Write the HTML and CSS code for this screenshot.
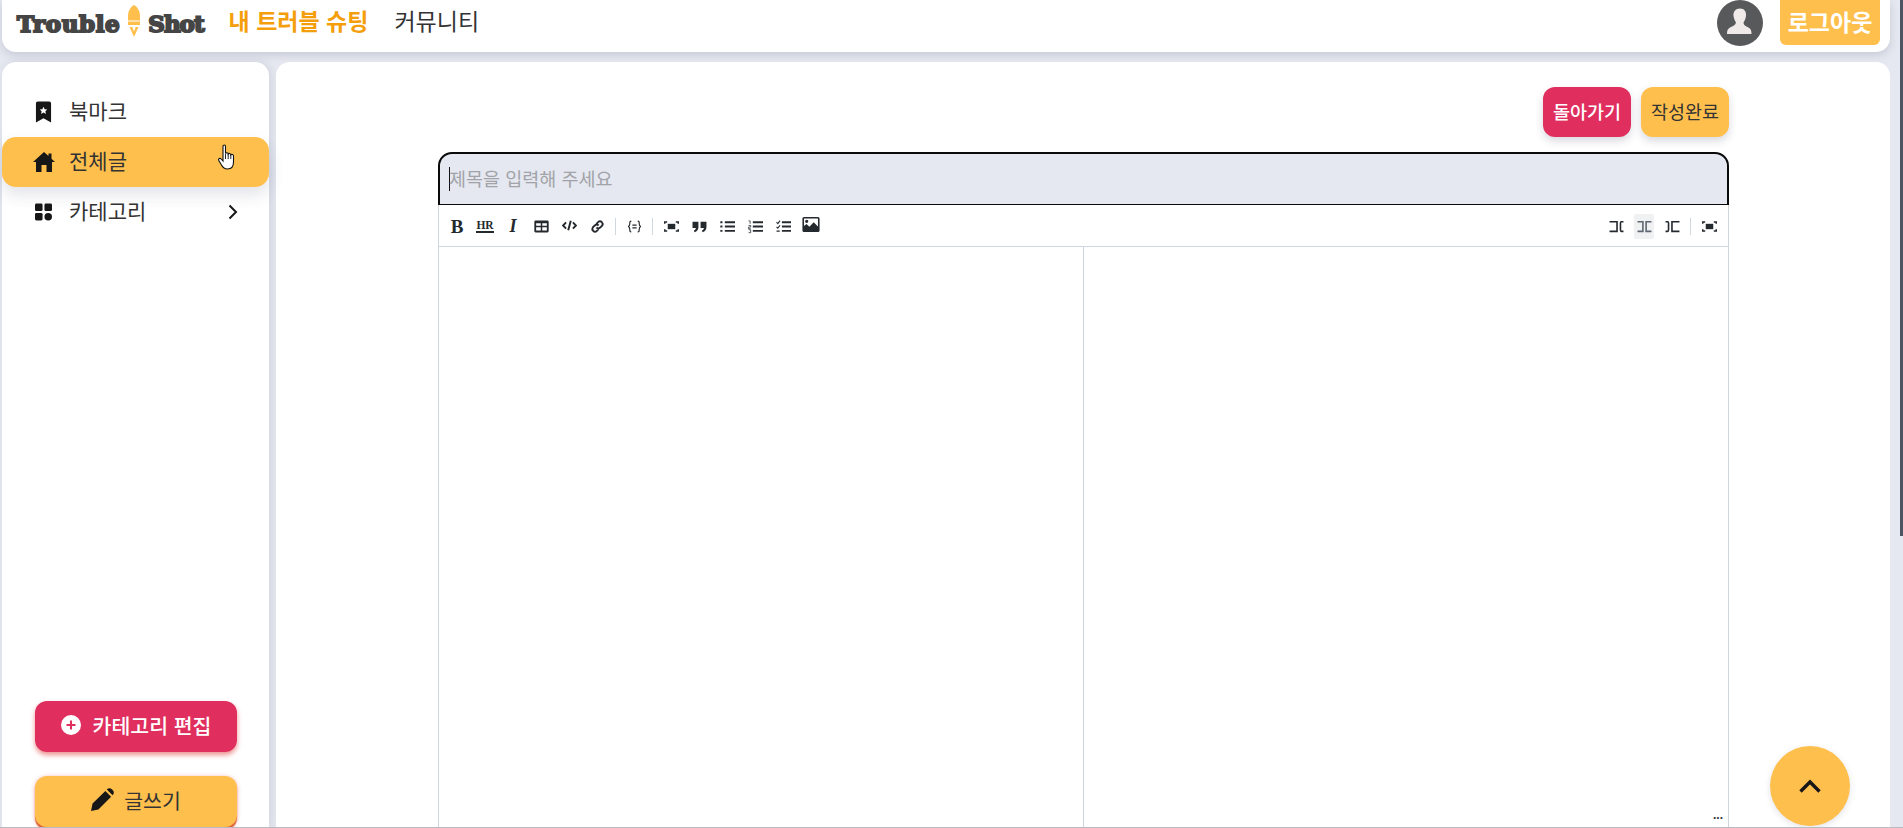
FILE: index.html
```html
<!DOCTYPE html>
<html lang="ko">
<head>
<meta charset="utf-8">
<title>Trouble Shot</title>
<link rel="stylesheet" href="styles.css">
</head>
<body>
<div class="page">
  <header class="topbar">
    <div class="brand">
      <span class="brand-word">Trouble</span>
      <svg class="rocket" viewBox="0 0 14 32"><path d="M7 0C10.500 2 13 6 13 11V20H1V11C1 6 3.500 2 7 0Z" fill="#ffbf4d"/><rect x="1" y="15.500" width="12" height="1" fill="#fff"/><path d="M2.500 22H11.500L7 32Z" fill="#ffbf4d"/><path d="M5.300 22H8.700L7 26.500Z" fill="#fff"/></svg>
      <span class="brand-word brand-tight">Shot</span>
    </div>
    <nav class="topnav">
      <a class="topnav-link is-active">내 트러블 슈팅</a>
      <a class="topnav-link">커뮤니티</a>
    </nav>
    <div class="account">
      <svg class="avatar" viewBox="0 0 46 46"><circle cx="23" cy="23" r="23" fill="#58595b"/><path d="M23 8.500C27.500 8.500 29.500 12 29 16C28.700 18.500 27.500 21 26.500 22.500C26.500 25 28.500 26 31.500 27.500C34 28.800 34.500 31 34.500 34H10C10 31 10.500 28.800 13 27.500C16 26 18.500 25 19 22.500C18 21 16.800 18.500 16.500 16C16 12 18.500 8.500 23 8.500Z" fill="#efeae8"/></svg>
      <button class="logout">로그아웃</button>
    </div>
  </header>

  <div class="workspace">
    <aside class="sidebar">
      <ul class="menu">
        <li class="menu-item">
          <svg class="menu-icon" viewBox="0 0 18 22"><path d="M1 2C1 1 1.800 0 3 0H15C16.200 0 17 1 17 2V22L9 17.500L1 22Z" fill="#171717"/><path d="M9 5.500L10.200 8L13 8.300L11 10.200L11.500 13L9 11.600L6.500 13L7 10.200L5 8.300L7.800 8Z" fill="#fff"/></svg>
          <span class="menu-label">북마크</span>
        </li>
        <li class="menu-item is-current">
          <svg class="menu-icon home" viewBox="0 0 22 20"><path d="M11 0L15.500 4V1.500H18.500V6.700L22 10H19V20H13.500V13H8.500V20H3V10H0Z" fill="#171717"/></svg>
          <span class="menu-label">전체글</span>
          <svg class="hand" viewBox="0 0 18 26"><path d="M5 2.200C5 .6 7.500 .6 7.500 2.200V9.500C8 8.500 10 8.500 10.200 10C10.700 9 12.700 9.300 12.800 10.800C13.500 10 15.500 10.300 15.500 12V18C15.500 22 13.500 25 9.500 25C6 25 4.800 23.500 3.500 21L.8 16.500C0 14.800 2 13.600 3.200 15L5 17Z" fill="#fff" stroke="#111" stroke-width="1.100"/><path d="M7.500 10V15M10.200 10V15M12.800 11V15" stroke="#111" stroke-width=".9"/></svg>
        </li>
        <li class="menu-item">
          <svg class="menu-icon" viewBox="0 0 18 18"><rect width="8" height="8" rx="1.500" fill="#171717"/><rect x="10" width="8" height="8" rx="1.500" fill="#171717"/><rect y="10" width="8" height="8" rx="1.500" fill="#171717"/><circle cx="14" cy="14" r="4" fill="#171717"/></svg>
          <span class="menu-label">카테고리</span>
          <svg class="menu-chevron" viewBox="0 0 10 16"><path d="M1.500 1.500L8 8L1.500 14.500" fill="none" stroke="#171717" stroke-width="2"/></svg>
        </li>
      </ul>
      <div class="side-actions">
        <button class="side-btn danger">
          <svg class="side-icon" viewBox="0 0 20 20"><circle cx="10" cy="10" r="10" fill="#fff"/><path d="M10 5.500V14.500M5.500 10H14.500" stroke="#e02f5f" stroke-width="2"/></svg>
          <span>카테고리 편집</span>
        </button>
        <button class="side-btn warm">
          <svg class="side-icon pencil" viewBox="0 0 24 24"><path d="M0 24L1.600 16.300L15 3L21 9L7.700 22.400ZM16.500 1.500C18 0 20 0 21.500 1L23 2.500C24.300 4 24 6 22.500 7.500Z" fill="#171717"/></svg>
          <span>글쓰기</span>
        </button>
      </div>
    </aside>

    <main class="content">
      <div class="form-actions">
        <button class="form-btn back">돌아가기</button>
        <button class="form-btn done">작성완료</button>
      </div>
      <div class="title-field">
        <span class="caret"></span>
        <span class="placeholder">제목을 입력해 주세요</span>
      </div>
      <section class="editor">
        <div class="toolbar">
          <span class="tool tool-b">B</span>
          <span class="tool tool-hr"><span class="hr-mark">HR</span></span>
          <span class="tool tool-i">I</span>
          <span class="tool"><svg class="ico" viewBox="0 0 14 14"><path fill-rule="evenodd" d="M1.500 1.500H12.500A1.200 1.200 0 0 1 13.700 2.700V11.300A1.200 1.200 0 0 1 12.500 12.500H1.500A1.200 1.200 0 0 1 .3 11.300V2.700A1.200 1.200 0 0 1 1.500 1.500ZM2 6.300H6.300V4H2ZM7.700 6.300H12V4H7.700ZM2 10.800H6.300V7.700H2ZM7.700 10.800H12V7.700H7.700Z" fill="#24292e"/></svg></span>
          <span class="tool tool-up"><svg class="ico" viewBox="0 0 14 14"><path d="M3.800 4L1 7L3.800 10M10.200 4L13 7L10.200 10M8.200 2.500L5.800 11.500" fill="none" stroke="#24292e" stroke-width="1.800"/></svg></span>
          <span class="tool"><svg class="ico" viewBox="0 0 14 14"><path d="M6 4.500L8 2.500A2.600 2.600 0 0 1 11.500 6L9.500 8A2.600 2.600 0 0 1 6 8M8 9.500L6 11.500A2.600 2.600 0 0 1 2.500 8L4.500 6A2.600 2.600 0 0 1 8 6" fill="none" stroke="#24292e" stroke-width="1.800"/></svg></span>
          <span class="tool-sep"></span>
          <span class="tool"><svg class="ico" viewBox="0 0 14 14"><path d="M4 2C2.500 2 2.600 3 2.600 4.500S2.500 6.700 1 7C2.500 7.300 2.600 8 2.600 9.500S2.500 12 4 12M10 2C11.500 2 11.400 3 11.400 4.500S11.500 6.700 13 7C11.500 7.300 11.400 8 11.400 9.500S11.500 12 10 12M5 5.700H9M5 8.300H9" fill="none" stroke="#24292e" stroke-width="1.100"/></svg></span>
          <span class="tool-sep"></span>
          <span class="tool"><svg class="ico" viewBox="0 0 14 14"><path d="M.7 4.500V2.700H3M11 2.700H13.300V4.500M13.300 9.500V11.300H11M3 11.300H.7V9.500" fill="none" stroke="#24292e" stroke-width="1.400"/><rect x="3.500" y="4.500" width="7" height="5" fill="#24292e"/></svg></span>
          <span class="tool"><svg class="ico" viewBox="0 0 14 14"><path d="M.5 2.500H6V7.500C6 10 4.800 11.800 2.300 12.300L1.800 10.800C3 10.500 3.500 9.500 3.600 8.500H.5ZM8 2.500H13.500V7.500C13.500 10 12.300 11.800 9.800 12.300L9.300 10.800C10.500 10.500 11 9.500 11.100 8.500H8Z" fill="#24292e"/></svg></span>
          <span class="tool"><svg class="ico" viewBox="0 0 14 14"><path d="M4.500 3H14M4.500 7H14M4.500 11H14M.3 3H2.300M.3 7H2.300M.3 11H2.300" fill="none" stroke="#24292e" stroke-width="1.700"/></svg></span>
          <span class="tool"><svg class="ico" viewBox="0 0 14 14"><path d="M4.500 3H14M4.500 7H14M4.500 11H14" fill="none" stroke="#24292e" stroke-width="1.700"/><path d="M.5 1.800H2V4.500M.5 6H2.500V7.500H.5V9H2.500M.5 10H2.500V12.800H.5" fill="none" stroke="#24292e" stroke-width=".7"/></svg></span>
          <span class="tool"><svg class="ico" viewBox="0 0 14 14"><path d="M5.500 3H14M5.500 7H14M5.500 11H14" fill="none" stroke="#24292e" stroke-width="1.700"/><path d="M.5 3L1.700 4.300L3.800 1.500M.5 7.300L1.700 8.500L3.800 5.800M.5 11.300H3.500" fill="none" stroke="#24292e" stroke-width="1"/></svg></span>
          <span class="tool tool-img"><svg class="ico-img" viewBox="0 0 16 14"><path fill-rule="evenodd" d="M1.500 0H14.500A1.500 1.500 0 0 1 16 1.500V12.500A1.500 1.500 0 0 1 14.500 14H1.500A1.500 1.500 0 0 1 0 12.500V1.500A1.500 1.500 0 0 1 1.500 0ZM1.500 1.300V8.500L3.800 6.500L6.500 9L10.500 4.800L14.500 8.800V1.300ZM4 2.500A1.500 1.500 0 1 1 4 5.500A1.500 1.500 0 0 1 4 2.500Z" fill="#24292e"/></svg></span>
          <span class="tool tool-push"><svg class="ico" viewBox="0 0 14 14"><path d="M.5 2.500H7.500V11.500H.5M13.500 2.500H11.500C10.700 2.500 10.700 3.500 10.700 4V10C10.700 10.500 10.700 11.500 11.500 11.500H13.500" fill="none" stroke="#24292e" stroke-width="1.500"/></svg></span>
          <span class="tool tool-on"><svg class="ico" viewBox="0 0 14 14"><path d="M.5 2.500H5.500V11.500H.5M13.500 2.500H8.500V11.500H13.500" fill="none" stroke="#5f6872" stroke-width="1.500"/></svg></span>
          <span class="tool"><svg class="ico" viewBox="0 0 14 14"><path d="M13.500 2.500H6.500V11.500H13.500M.5 2.500H2.500C3.300 2.500 3.300 3.500 3.300 4V10C3.300 10.500 3.300 11.500 2.500 11.500H.5" fill="none" stroke="#24292e" stroke-width="1.500"/></svg></span>
          <span class="tool-sep"></span>
          <span class="tool"><svg class="ico" viewBox="0 0 14 14"><path d="M.7 4.500V2.700H3M11 2.700H13.300V4.500M13.300 9.500V11.300H11M3 11.300H.7V9.500" fill="none" stroke="#24292e" stroke-width="1.400"/><rect x="3.500" y="4.500" width="7" height="5" fill="#24292e"/></svg></span>
        </div>
        <div class="panes">
          <div class="pane pane-input"></div>
          <div class="pane"></div>
        </div>
        <span class="grip">...</span>
      </section>
    </main>
  </div>
</div>
<button class="to-top"><svg class="to-top-icon" viewBox="0 0 24 16"><path d="M2.500 13.500L12 4L21.500 13.500" fill="none" stroke="#171717" stroke-width="3.400"/></svg></button>
<div class="scroll-thumb"></div>
<div class="window-edge"></div>
</body>
</html>
```

FILE: styles.css
```css
* { box-sizing: border-box; }
html, body { margin: 0; height: 828px; overflow: hidden; }
body {
  background: #e5e8f0;
  font-family: "Noto Sans CJK KR", "Noto Sans", sans-serif;
  color: #222;
}
button { font-family: inherit; border: 0; cursor: pointer; }
ul { list-style: none; margin: 0; padding: 0; }

.page { width: 1888px; margin-left: 2px; display: flex; flex-direction: column; gap: 10px; height: 828px; }

.topbar {
  height: 52px; flex: none;
  background: #fff;
  border-radius: 0 0 14px 14px;
  box-shadow: 0 3px 8px rgba(60, 65, 100, .18);
  display: flex; align-items: flex-start;
}
.brand { display: flex; align-items: center; gap: 7px; margin: 5px 0 0 15px; height: 32px; }
.brand-word {
  font-family: "DejaVu Serif", serif; font-weight: 700; font-size: 23px; line-height: 32px;
  color: #454545; -webkit-text-stroke: 2px #454545; letter-spacing: .6px;
  margin-top: 5px;
}
.brand-tight { letter-spacing: -1px; }
.rocket { width: 14px; height: 32px; flex: none; }
.topnav { display: flex; gap: 26px; margin-left: 25px; }
.topnav-link { font-size: 23px; line-height: 40px; color: #333; }
.topnav-link.is-active { color: #f59e0b; font-weight: 700; }
.account { margin-left: auto; margin-right: 10px; display: flex; gap: 17px; }
.avatar { width: 46px; height: 46px; display: block; }
.logout {
  width: 100px; height: 45px; padding: 0 0 3px; background: #ffbf4d; color: #fff;
  font-size: 23px; font-weight: 700; border-radius: 0 0 6px 6px;
}

.workspace { flex: 1; display: flex; gap: 7px; min-height: 0; }

.sidebar {
  width: 267px; flex: none; background: #fff;
  border-radius: 14px 14px 0 0;
  box-shadow: 2px 0 8px rgba(60, 65, 100, .12);
  display: flex; flex-direction: column;
  padding-top: 25px;
}
.menu { display: flex; flex-direction: column; }
.menu-item {
  position: relative;
  height: 50px; display: flex; align-items: center;
  padding: 0 31px 0 33px; gap: 17px; font-size: 21px; color: #333;
}
.menu-label { padding-bottom: 5px; }
.menu-item.is-current { background: #ffbf4d; border-radius: 14px; box-shadow: 0 8px 16px rgba(60, 65, 100, .14); }
.menu-icon { width: 17px; height: 22px; flex: none; }
.menu-icon.home { width: 22px; margin: 0 -2.500px; }
.menu-chevron { width: 10px; height: 16px; margin-left: auto; }
.hand { position: absolute; left: 216px; top: 7px; width: 18px; height: 26px; }

.side-actions { margin-top: auto; padding: 0 33px; display: flex; flex-direction: column; gap: 24px; margin-bottom: 1px; }
.side-btn {
  height: 51px; width: 202px; border-radius: 12px; display: flex; align-items: center; justify-content: center;
  font-size: 20.500px; padding: 0 0 4px;
}
.side-btn.danger { background: #e02f5f; color: #fff; font-weight: 500; gap: 12px; box-shadow: 0 3px 5px rgba(226, 70, 70, .6); }
.side-btn.warm { background: #ffbf4d; color: #333; gap: 10px; box-shadow: 0 1px 4px rgba(226, 70, 70, .5), 0 3px 1px #e0703a; }
.side-icon { width: 20px; height: 20px; }
.side-icon.pencil { width: 23px; height: 23px; }

.content {
  flex: 1; background: #fff; border-radius: 14px 14px 0 0;
  padding: 25px 161px 0 162px;
  min-width: 0;
}
.form-actions { display: flex; justify-content: flex-end; gap: 10px; }
.form-btn {
  width: 88px; height: 50px; border-radius: 12px; font-size: 18.500px; padding: 0 0 2px;
  box-shadow: 0 4px 8px rgba(60, 65, 100, .2);
}
.form-btn.back { background: #e02f5f; color: #fff; font-weight: 500; }
.form-btn.done { background: #ffbf4d; color: #333; }

.title-field {
  margin-top: 15px; height: 53px; background: #e5e8f0;
  border: 2px solid #0a0a0a; border-bottom-width: 1px; border-radius: 14px 14px 0 0;
  display: flex; align-items: center; padding-left: 9px; font-size: 18.500px;
}
.caret { width: 1px; height: 24px; background: #111; }
.placeholder { color: #a1a3a8; padding-bottom: 3px; margin-left: -1px; }

.editor { position: relative; height: 640px; border: 1px solid #d0d4dc; border-top: 0; border-radius: 0 0 3px 3px; background: #fff; }
.toolbar {
  height: 42px; display: flex; align-items: center; padding: 2px 5px 0 4px;
  border-bottom: 1px solid #d0d7e2;
}
.tool {
  width: 20px; height: 25px; margin: 0 4px; flex: none;
  display: flex; align-items: center; justify-content: center; color: #24292e;
}
.tool-up { padding-bottom: 2px; }
.tool-b { font: 700 19px "Liberation Serif", serif; }
.tool-hr { font: 700 11.500px "Liberation Serif", serif; }
.hr-mark { border-bottom: 2px solid #24292e; line-height: 11px; }
.tool-i { font: italic 700 18px "Liberation Serif", serif; }
.tool-img { padding-bottom: 4px; }
.tool-push { margin-left: auto; }
.tool-on { background: #f0f1f3; border-radius: 2px; }
.ico { width: 15px; height: 15px; display: block; }
.ico-img { width: 18px; height: 15px; display: block; }
.tool-sep { width: 1px; height: 17px; margin: 0 4px; background: #d0d7de; flex: none; }

.panes { display: flex; height: 600px; }
.pane { flex: 1; }
.pane-input { border-right: 1px solid #d0d4dc; }
.grip { position: absolute; left: 1274px; top: 604px; font: 700 12px/12px "Liberation Sans", sans-serif; color: #333; }

.to-top {
  position: fixed; left: 1770px; top: 746px; width: 80px; height: 80px; border-radius: 50%;
  background: #ffbf4d; padding: 0; display: flex; align-items: center; justify-content: center;
  box-shadow: 0 2px 6px rgba(60, 65, 100, .15);
}
.to-top-icon { width: 24px; height: 16px; }
.scroll-thumb { position: fixed; right: 0; top: 0; width: 3px; height: 536px; background: #4b5563; }
.window-edge { position: fixed; left: 0; right: 0; bottom: 0; height: 1px; background: #b9bbc0; }
```
